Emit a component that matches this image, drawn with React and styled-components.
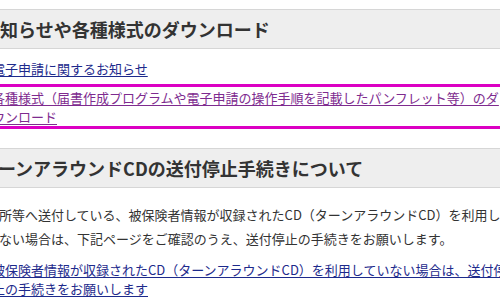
import React from "react";
import styled, { createGlobalStyle } from "styled-components";

const GlobalStyle = createGlobalStyle`
  html, body {
    margin: 0;
    padding: 0;
    background: #ffffff;
    overflow: hidden;
  }
  body {
    font-family: "Noto Sans CJK JP", "Noto Sans", sans-serif;
    color: #333333;
  }
`;

const Viewport = styled.div`
  width: 500px;
  height: 308px;
  overflow: hidden;
`;

const Canvas = styled.main`
  width: 580px;
  margin-left: -30px;
  padding-top: 9px;
`;

const Heading = styled.h2`
  margin: ${(p) => (p.$first ? "0" : "19px 0 0")};
  padding: 0 0 0 ${(p) => p.$indent}px;
  background: #eeeeee;
  border-top: 1px solid #d6d6d6;
  border-bottom: 1px solid #d6d6d6;
  font-size: 18px;
  font-weight: 700;
  line-height: 38px;
  color: #333333;
  white-space: nowrap;
  letter-spacing: 0;
`;

const LinkList = styled.ul`
  list-style: none;
  margin: 0;
  padding: 10px 42px 0 22px;
`;

const LinkItem = styled.li`
  font-size: 13px;
  line-height: ${(p) => (p.$focused ? "19px" : "20px")};
  ${(p) =>
    p.$focused &&
    `
    margin: 5px -3px 0;
    padding-top: 1px;
    border: 3px solid #dc00c3;
  `}
`;

const TextLink = styled.a`
  color: ${(p) => (p.$visited ? "#7e2b8f" : "#1d2a8c")};
  text-decoration: underline;
  text-underline-offset: 2px;
`;

const Paragraph = styled.p`
  margin: 15px 0 0;
  padding: 0 16px 0 29px;
  font-size: 13px;
  line-height: 24px;
  color: #333333;
`;

const LinkBlock = styled.p`
  margin: 9px 0 0;
  padding: 0 42px 0 22px;
  font-size: 13px;
  line-height: 19px;
`;

export default function App() {
  return (
    <>
      <GlobalStyle />
      <Viewport>
        <Canvas>
          <Heading $first $indent={12}>
            お知らせや各種様式のダウンロード
          </Heading>
          <LinkList>
            <LinkItem>
              <TextLink href="#">電子申請に関するお知らせ</TextLink>
            </LinkItem>
            <LinkItem $focused>
              <TextLink href="#" $visited>
                各種様式（届書作成プログラムや電子申請の操作手順を記載したパンフレット等）のダウンロード
              </TextLink>
            </LinkItem>
          </LinkList>
          <Heading $indent={10}>ターンアラウンドCDの送付停止手続きについて</Heading>
          <Paragraph>
            所等へ送付している、被保険者情報が収録されたCD（ターンアラウンドCD）を利用していない場合は、下記ページをご確認のうえ、送付停止の手続きをお願いします。
          </Paragraph>
          <LinkBlock>
            <TextLink href="#">
              被保険者情報が収録されたCD（ターンアラウンドCD）を利用していない場合は、送付停止の手続きをお願いします
            </TextLink>
          </LinkBlock>
        </Canvas>
      </Viewport>
    </>
  );
}
